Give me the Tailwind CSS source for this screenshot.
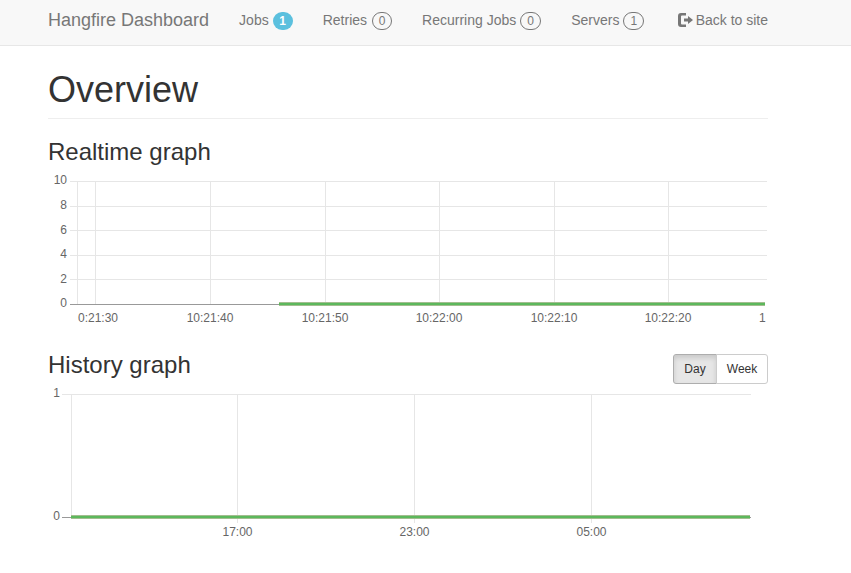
<!DOCTYPE html>
<html lang="en">
  <head>
    <meta charset="UTF-8" />
    <meta name="viewport" content="width=device-width, initial-scale=1.0" />
    <title>Overview - Hangfire</title>
    <script src="https://cdn.jsdelivr.net/npm/@tailwindcss/browser@4"></script>
  </head>
  <body class="bg-white text-[#333] font-['Liberation_Sans',Arial,sans-serif] text-sm">
    <!-- Navbar -->
    <nav class="h-[46px] bg-[#f8f8f8] border-b border-[#e7e7e7] pl-12 text-[#777]">
      <div class="w-[720px] h-[40px] flex items-center">
        <a class="text-lg mr-[30px] whitespace-nowrap">Hangfire Dashboard</a>
        <ul class="flex items-center gap-[30px] flex-1">
          <li class="flex items-center gap-1">Jobs <span class="mt-[2px] h-[18px] w-5 rounded-full bg-[#5bc0de] text-white text-xs font-bold flex items-center justify-center">1</span></li>
          <li class="flex items-center gap-[5px]">Retries <span class="mt-[2px] h-[18px] w-5 rounded-full border border-[#777] text-xs flex items-center justify-center">0</span></li>
          <li class="flex items-center gap-1">Recurring Jobs <span class="mt-[2px] h-[18px] w-[21px] rounded-full border border-[#777] text-xs flex items-center justify-center">0</span></li>
          <li class="flex items-center gap-1">Servers <span class="mt-[2px] h-[18px] w-[21px] rounded-full border border-[#777] text-xs flex items-center justify-center">1</span></li>
          <li class="ml-auto flex items-center gap-[3px]">
            <svg width="15" height="14" viewBox="0 0 15 14" fill="currentColor">
              <path d="M0 3Q0 0 3 0H8V2.500H4Q3 2.500 3 3.500V10.500Q3 11.500 4 11.500H8V14H3Q0 14 0 11Z" />
              <path d="M6 5.500H10V3L15 7L10 11V8.500H6Z" />
            </svg>
            Back to site
          </li>
        </ul>
      </div>
    </nav>

    <main class="w-[720px] ml-12">
      <h1 class="text-4xl leading-[40px] mt-6 pb-2 border-b border-[#eee]">Overview</h1>

      <h3 class="text-2xl leading-[26px] mt-5">Realtime graph</h3>
      <svg class="block w-[768px] -ml-12 mt-[7px]" height="166" viewBox="0 -6 768 166" font-size="12" fill="#666" font-family="Liberation Sans">
        <g stroke="#e6e6e6" stroke-width="1">
          <path d="M70 3.500H767M70 28.500H767M70 52.500H767M70 77.500H767M70 101.500H767" />
          <path d="M77.500 3V126M95.500 3V126M210.500 3V126M325.500 3V126M439.500 3V126M554.500 3V126M668.500 3V126" />
        </g>
        <path d="M70 126.500H279" stroke="#999" stroke-width="1" />
        <path d="M279 126H765" stroke="#a3bd8f" stroke-width="4" />
        <path d="M279 126H765" stroke="#5cb85c" stroke-width="2" />
        <g text-anchor="end">
          <text x="67" y="6">10</text>
          <text x="67" y="31">8</text>
          <text x="67" y="56">6</text>
          <text x="67" y="80">4</text>
          <text x="67" y="105">2</text>
          <text x="67" y="129">0</text>
        </g>
        <text x="78" y="144">0:21:30</text>
        <g text-anchor="middle">
          <text x="210" y="144">10:21:40</text>
          <text x="325" y="144">10:21:50</text>
          <text x="439" y="144">10:22:00</text>
          <text x="554" y="144">10:22:10</text>
          <text x="668" y="144">10:22:20</text>
        </g>
        <text x="759" y="144">1</text>
      </svg>

      <div class="flex items-start justify-between mt-4">
        <h3 class="text-2xl leading-[26px] -mt-[2px]">History graph</h3>
        <div class="flex text-xs h-[30px] text-[#333]">
          <button class="w-11 rounded-l-[3px] border border-[#adadad] bg-[#e6e6e6] shadow-[inset_0_3px_5px_rgba(0,0,0,0.125)]">Day</button>
          <button class="w-[52px] -ml-px rounded-r-[3px] border border-[#ccc] bg-white">Week</button>
        </div>
      </div>
      <svg class="block w-[768px] -ml-12 mt-px" height="164" viewBox="0 -4 768 164" font-size="12" fill="#666" font-family="Liberation Sans">
        <g stroke="#e6e6e6" stroke-width="1">
          <path d="M62 5.500H751" />
          <path d="M71.500 5V128M237.500 5V134M414.500 5V134M591.500 5V134" />
        </g>
        <path d="M62 128.500H751" stroke="#999" stroke-width="1" />
        <path d="M71 128H750" stroke="#a3bd8f" stroke-width="4" />
        <path d="M71 128H750" stroke="#5cb85c" stroke-width="2" />
        <g text-anchor="end">
          <text x="60" y="8">1</text>
          <text x="60" y="131">0</text>
        </g>
        <g text-anchor="middle">
          <text x="237.500" y="147">17:00</text>
          <text x="414.500" y="147">23:00</text>
          <text x="591.500" y="147">05:00</text>
        </g>
      </svg>
    </main>
  </body>
</html>
